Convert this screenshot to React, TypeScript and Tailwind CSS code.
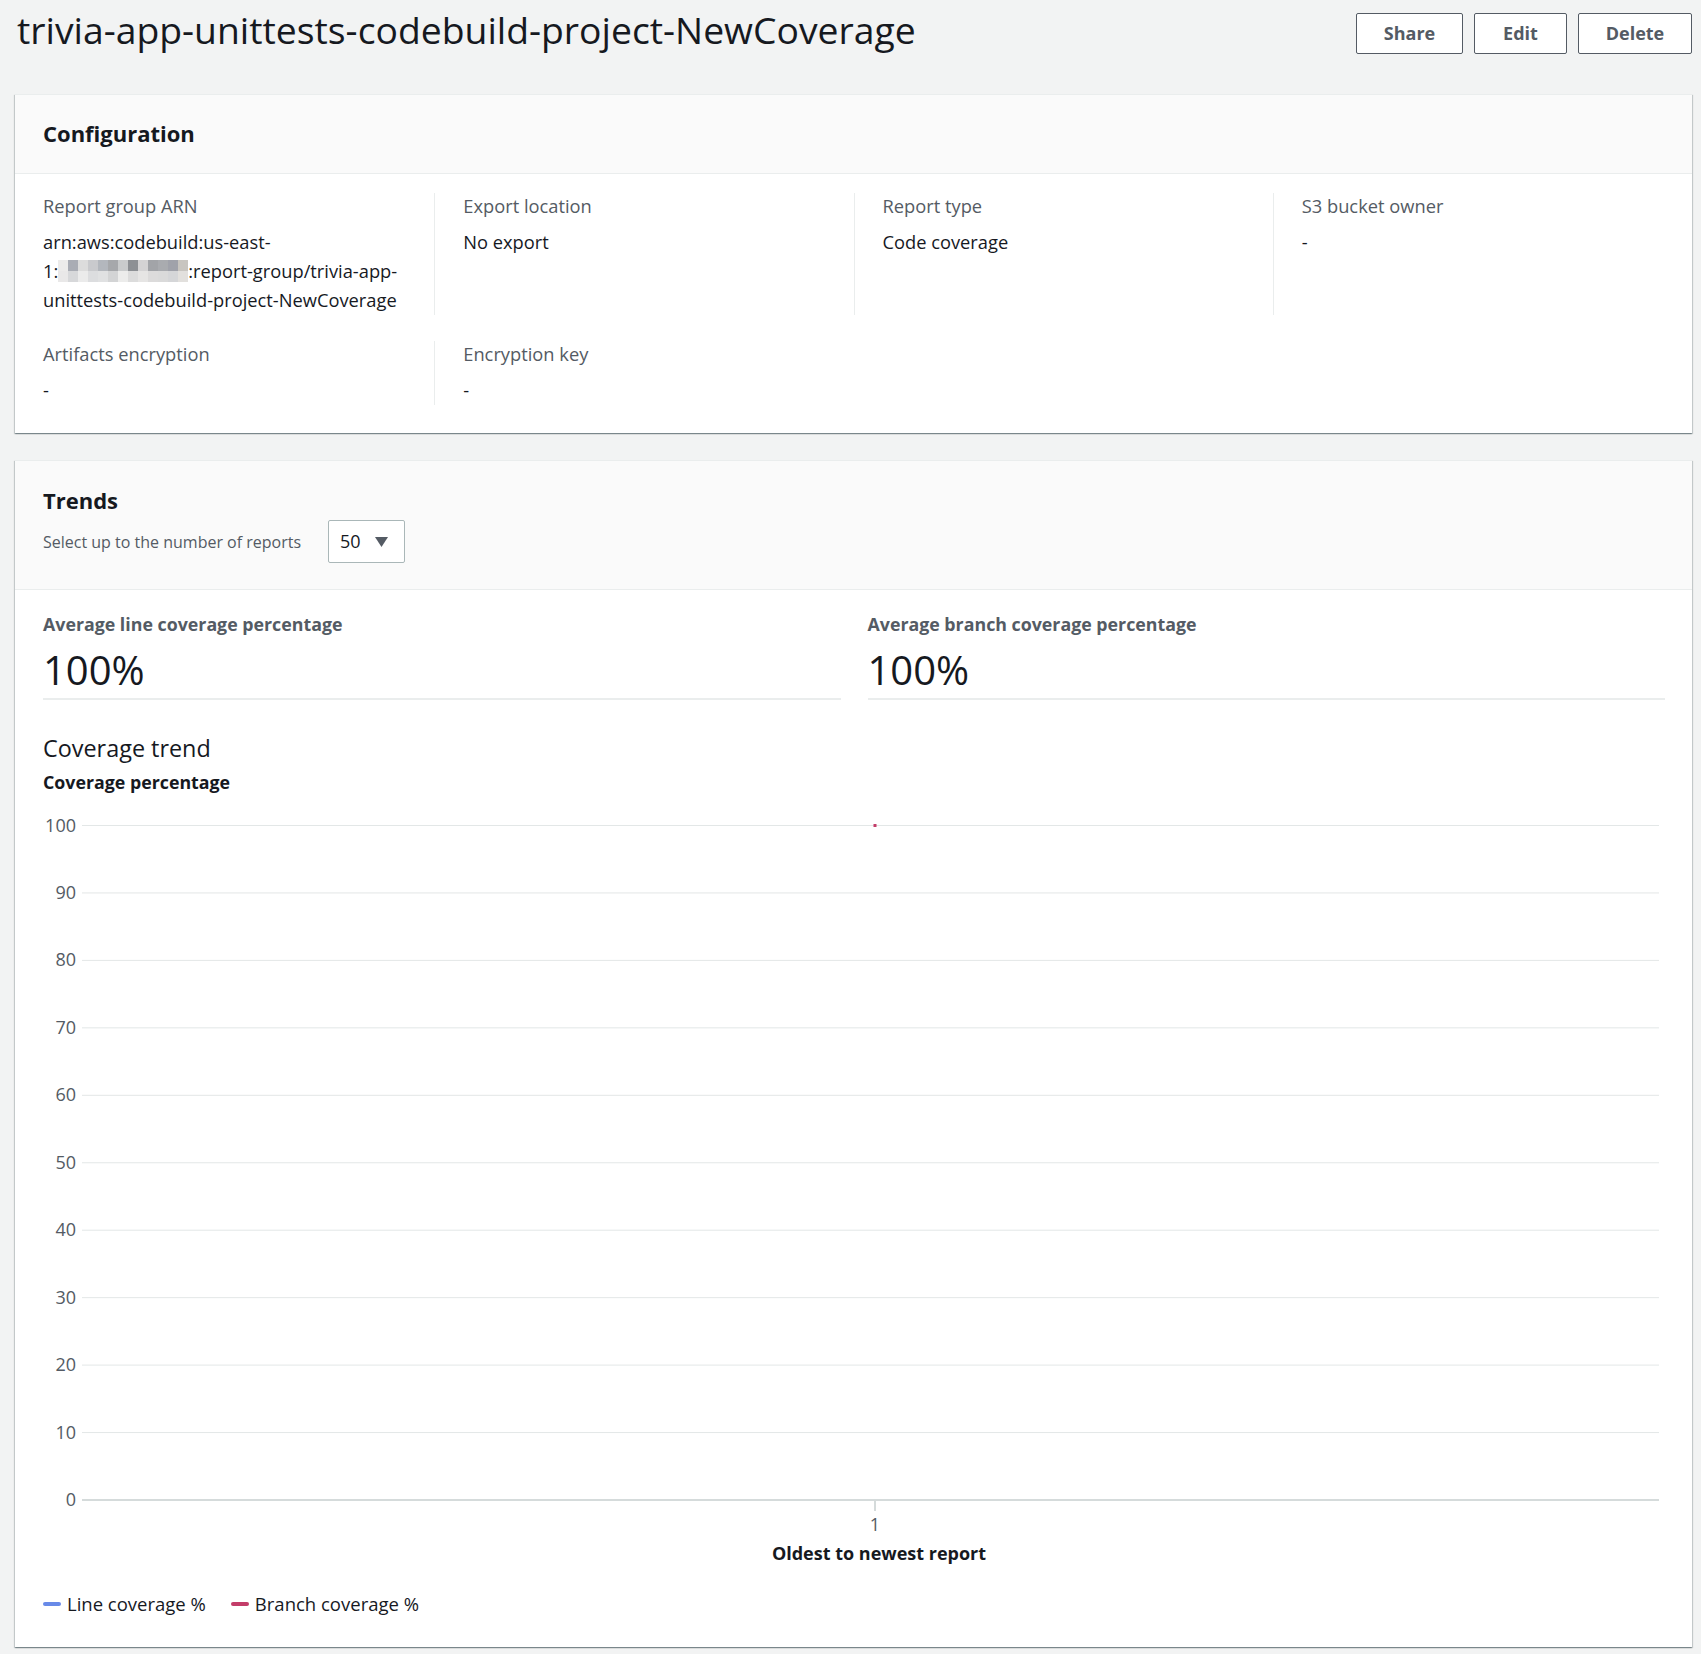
import { Fragment } from 'react';

const mosaic = [
  ['#ecebea', '#a9acb4', '#dcdcdc', '#c9cacd', '#b3b7bd', '#a6a8ab', '#c9cbcc', '#8d9094', '#d4d3d4', '#a2a4a8', '#a9abaf', '#a0a2aa', '#c8c5c0'],
  ['#e9e8e8', '#d7d8da', '#ebebeb', '#dcdddf', '#e0e1e2', '#d3d4d5', '#ececeb', '#dcdcdc', '#e6e5e4', '#dcdbdb', '#dadada', '#d5d6d8', '#e2e0dd'],
];

const ticks = [100, 90, 80, 70, 60, 50, 40, 30, 20, 10, 0];

function Field({ label, children, border }: { label: string; children: React.ReactNode; border?: boolean }) {
  return (
    <div className={`pl-[28px] pr-[20px] pb-[1px] ${border ? 'border-l border-[#eaeded]' : ''}`}>
      <div className="text-[18.3px] leading-[26px] text-[#545b64]">{label}</div>
      <div className="mt-[8px] text-[18.3px] leading-[29px] text-[#16191f]">{children}</div>
    </div>
  );
}

function Redacted() {
  return (
    <span className="inline-flex flex-col align-middle -mt-[4px]">
      {mosaic.map((row, i) => (
        <span key={i} className="flex">
          {row.map((c, j) => (
            <span key={j} className="block w-[10px] h-[11px]" style={{ backgroundColor: c }} />
          ))}
        </span>
      ))}
    </span>
  );
}

const cardShadow =
  'shadow-[0_1px_1px_0_rgba(0,28,36,0.3),1px_1px_1px_0_rgba(0,28,36,0.15),-1px_1px_1px_0_rgba(0,28,36,0.15)]';

export default function App() {
  const top = 15.5;
  const step = 67.45;

  return (
    <div className="min-h-screen w-full bg-[#f2f3f3] pl-[15px] pr-[9px] pb-[7px] font-['Open_Sans',sans-serif]">
      {/* Header */}
      <div className="flex items-start justify-between pt-[13px] mb-[40px]">
        <h1 className="-mt-[5px] ml-[2px] text-[37.3px] leading-[44px] text-[#16191f]">
          trivia-app-unittests-codebuild-project-NewCoverage
        </h1>
        <div className="flex gap-[11px]">
          {[
            ['Share', 'w-[107px]'],
            ['Edit', 'w-[93px]'],
            ['Delete', 'w-[114px]'],
          ].map(([t, w]) => (
            <button
              key={t}
              className={`${w} h-[41px] rounded-[2px] border border-[#545b64] bg-white text-[18px] font-bold text-[#545b64]`}
            >
              {t}
            </button>
          ))}
        </div>
      </div>

      {/* Configuration */}
      <div className={`bg-white border-t border-[#eaeded] ${cardShadow}`}>
        <div className="h-[79px] flex items-center px-[28px] bg-[#fafafa] border-b border-[#eaeded]">
          <h2 className="-mt-[2px] text-[22px] font-bold text-[#16191f]">Configuration</h2>
        </div>
        <div className="grid grid-cols-4 gap-y-[26px] pt-[19px] pb-[28px]">
          <Field label="Report group ARN">
            <span className="block">arn:aws:codebuild:us-east-</span>
            <span className="block">
              1:<Redacted />:report-group/trivia-app-
            </span>
            <span className="block">unittests-codebuild-project-NewCoverage</span>
          </Field>
          <Field label="Export location" border>
            No export
          </Field>
          <Field label="Report type" border>
            Code coverage
          </Field>
          <Field label="S3 bucket owner" border>
            -
          </Field>
          <Field label="Artifacts encryption">-</Field>
          <Field label="Encryption key" border>
            -
          </Field>
        </div>
      </div>

      {/* Trends */}
      <div className={`mt-[27px] bg-white border-t border-[#eaeded] ${cardShadow}`}>
        <div className="px-[28px] pt-[24px] pb-[26px] bg-[#fafafa] border-b border-[#eaeded]">
          <h2 className="text-[22px] leading-[30px] font-bold text-[#16191f]">Trends</h2>
          <div className="mt-[5px] flex items-center gap-[27px]">
            <span className="text-[16px] text-[#545b64]">Select up to the number of reports</span>
            <div className="w-[77px] h-[43px] flex items-center justify-between pl-[11px] pr-[15px] bg-white border border-[#aab7b8] rounded-[2px]">
              <span className="text-[18px] text-[#16191f]">50</span>
              <svg width="15" height="12" viewBox="0 0 15 12">
                <path d="M1 1h13L7.5 11z" fill="#545b64" />
              </svg>
            </div>
          </div>
        </div>

        <div className="px-[28px] pr-[27px] pt-[21px] pb-[30px]">
          <div className="grid grid-cols-2 gap-x-[27px]">
            {['Average line coverage percentage', 'Average branch coverage percentage'].map((l) => (
              <div key={l} className="border-b-2 border-[#eaeded] pb-[5px]">
                <div className="text-[17.8px] leading-[26px] font-bold text-[#545b64]">{l}</div>
                <div className="mt-[10px] text-[40px] leading-[46px] text-[#16191f]">100%</div>
              </div>
            ))}
          </div>

          <div className="mt-[32px] text-[23.4px] leading-[32px] text-[#16191f]">Coverage trend</div>
          <div className="mt-[5px] text-[17.8px] leading-[26px] font-bold text-[#16191f]">Coverage percentage</div>

          <svg width="1622" height="726" className="mt-[15px] block font-['Open_Sans',sans-serif]">
            {ticks.map((t, i) => {
              const y = top + i * step;
              return (
                <Fragment key={t}>
                  <line
                    x1="39"
                    x2="1616"
                    y1={y}
                    y2={y}
                    stroke={t === 0 ? '#d5dbdb' : '#e3e7e7'}
                    strokeWidth={t === 0 ? 2 : 1}
                  />
                  <text x="33" y={y + 6} textAnchor="end" fontSize="18" fill="#545b64">
                    {t}
                  </text>
                </Fragment>
              );
            })}
            <line x1="832" x2="832" y1={top + 10 * step} y2={top + 10 * step + 11} stroke="#d5dbdb" strokeWidth="2" />
            <text x="832" y="721" textAnchor="middle" fontSize="18" fill="#545b64">
              1
            </text>
            <rect x="830.5" y={top - 1.5} width="3" height="3" fill="#c33d69" />
          </svg>

          <div className="mt-[4px] pl-[50px] text-center text-[18px] leading-[26px] font-bold text-[#16191f]">
            Oldest to newest report
          </div>

          <div className="mt-[25px] flex items-center gap-[25px] text-[18.5px] leading-[26px] text-[#16191f]">
            <div className="flex items-center gap-[6px]">
              <span className="block w-[18px] h-[4px] rounded-full bg-[#688ae8]" />
              Line coverage %
            </div>
            <div className="flex items-center gap-[6px]">
              <span className="block w-[18px] h-[4px] rounded-full bg-[#c33d69]" />
              Branch coverage %
            </div>
          </div>
        </div>
      </div>
    </div>
  );
}
